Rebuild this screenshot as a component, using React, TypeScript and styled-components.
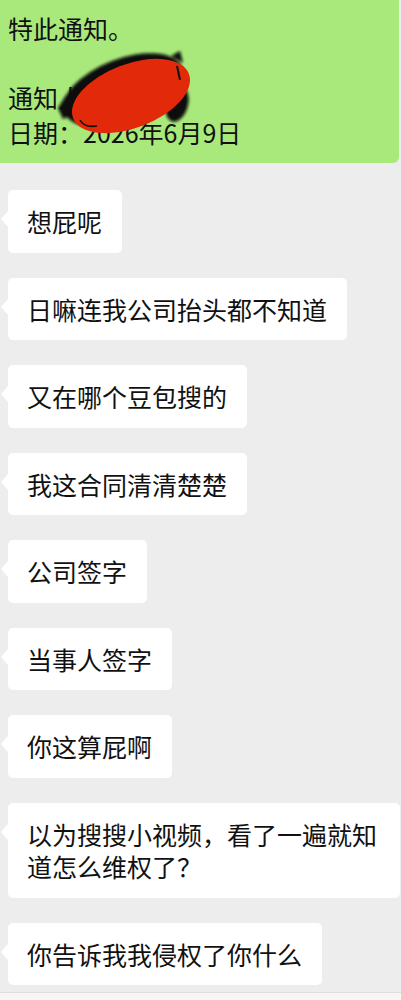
import React from 'react';
import styled, { createGlobalStyle } from 'styled-components';

const GlobalStyle = createGlobalStyle`
    html, body {
        margin: 0;
        padding: 0;
        background: #ededed;
        overflow: hidden;
    }
    body {
        font-family: "Noto Sans CJK SC", "Noto Sans", sans-serif;
        color: #111;
    }
`;

const Page = styled.div`
    width: 401px;
    height: 1000px;
    display: flex;
    flex-direction: column;
    background: #ededed;
    overflow: hidden;
`;

const SentBubble = styled.div`
    position: relative;
    margin-right: 2px;
    padding: 11px 20px 14px 8px;
    background: #a9e97b;
    border-radius: 0 0 6px 0;
    font-size: 25px;
    line-height: 34.5px;
    white-space: pre-line;
`;

const Scribble = styled.svg`
    position: absolute;
    left: 0;
    top: 0;
    width: 220px;
    height: 150px;
    pointer-events: none;
`;

const Thread = styled.div`
    display: flex;
    flex-direction: column;
    align-items: flex-start;
    gap: 25px;
    padding: 27px 0 0 8px;
`;

const Bubble = styled.div`
    position: relative;
    box-sizing: border-box;
    max-width: 392px;
    padding: 15px 20px 15px 19px;
    background: #fff;
    border-radius: 5px;
    font-size: 25px;
    line-height: 32.5px;

    &::before {
        content: '';
        position: absolute;
        left: -7px;
        top: 21px;
        border-top: 8.5px solid transparent;
        border-bottom: 8.5px solid transparent;
        border-right: 7px solid #fff;
    }
`;

const InputBar = styled.div`
    margin-top: 7px;
    height: 30px;
    border-top: 1px solid #dedede;
    background: #f6f6f6;
`;

const messages = [
    '想屁呢',
    '日嘛连我公司抬头都不知道',
    '又在哪个豆包搜的',
    '我这合同清清楚楚',
    '公司签字',
    '当事人签字',
    '你这算屁啊',
    '以为搜搜小视频，看了一遍就知道怎么维权了？',
    '你告诉我我侵权了你什么',
];

// hand-drawn redaction over the sender's name
const Redaction = () => (
    <Scribble viewBox="0 0 220 150">
        <defs>
            <filter id="soft" x="-20%" y="-20%" width="140%" height="140%">
                <feGaussianBlur stdDeviation="1.6" />
            </filter>
        </defs>
        <g filter="url(#soft)" fill="#0a0a0a">
            <ellipse cx="123" cy="90" rx="63" ry="31" transform="rotate(-21 123 90)" />
            <ellipse cx="177" cy="104" rx="11" ry="18" transform="rotate(15 177 104)" />
            <path d="M58 108 L66 95 L75 99 L72 115 L63 119 Z" />
            <path d="M171 56 L180 51 L183 63 Z" />
        </g>
        <ellipse cx="131" cy="96" rx="62" ry="32" transform="rotate(-21 131 96)" fill="#e2290a" />
        <path d="M80 120 Q84 128 97 126" stroke="#111" strokeWidth="1.6" fill="none" />
        <path d="M177 66 L180 80" stroke="#111" strokeWidth="2" fill="none" />
    </Scribble>
);

export default function App() {
    return (
        <Page>
            <GlobalStyle />
            <SentBubble>
                {'特此通知。\n\n通知人：某某某\n日期：2026年6月9日'}
                <Redaction />
            </SentBubble>
            <Thread>
                {messages.map((text) => (
                    <Bubble key={text}>{text}</Bubble>
                ))}
            </Thread>
            <InputBar />
        </Page>
    );
}
